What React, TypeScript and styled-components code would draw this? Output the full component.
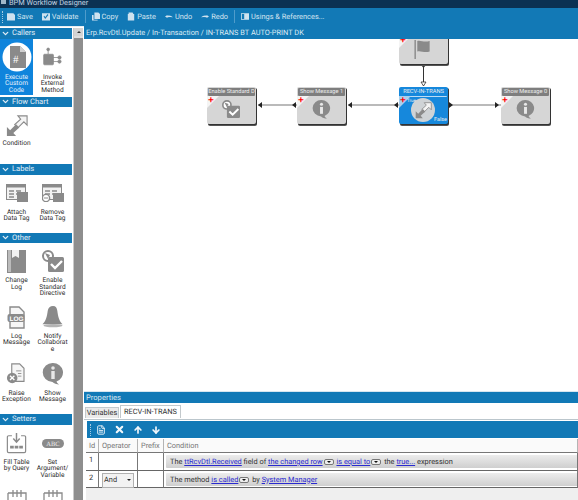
import React from 'react';
import styled, { createGlobalStyle } from 'styled-components';
import { FileText, X, ArrowUp, ArrowDown, ChevronDown } from 'lucide-react';

const GlobalStyle = createGlobalStyle`
  html, body {
    margin: 0;
    padding: 0;
    height: 100%;
    overflow: hidden;
    background: #fff;
    font-family: Roboto, "Liberation Sans", sans-serif;
    text-rendering: geometricPrecision;
  }
  #root { height: 100%; }
`;

const Page = styled.div`
  width: 578px;
  height: 500px;
  display: flex;
  flex-direction: column;
  overflow: hidden;
`;

const TitleBar = styled.div`
  height: 8px;
  flex: none;
  display: flex;
  gap: 3px;
  background: #0b3153;
  color: #c3d3e0;
  font-size: 7.4px;
  line-height: 5px;
  padding-left: 1px;
  overflow: hidden;
`;

const TitleMark = styled.span`
  width: 5px;
  height: 4px;
  background: #9fb6c8;
`;

const Toolbar = styled.div`
  height: 17px;
  flex: none;
  background: #1279b6;
  display: flex;
  align-items: center;
  padding-left: 2px;
  color: #d3e4f0;
  font-size: 7.4px;
  white-space: nowrap;
  overflow: hidden;
`;

const ToolGrip = styled.span`
  height: 12px;
  border-left: 1px dotted #a8cde4;
`;

const GridGrip = styled(ToolGrip)`
  margin-right: -3px;
`;

const ToolButton = styled.span<{ $gap?: number }>`
  display: flex;
  align-items: center;
  gap: 2px;
  margin-left: ${(p) => p.$gap ?? 9}px;
`;

const ToolSep = styled.span`
  width: 1px;
  height: 13px;
  background: #4f9ccb;
  margin-left: 6px;
`;

const Body = styled.div`
  flex: 1;
  min-height: 0;
  display: flex;
  background: #1279b6;
`;

const Sidebar = styled.div`
  width: 84px;
  flex: none;
  display: flex;
  padding-top: 1px;
  background: #fff;
  border-top: 1px solid #e6eef4;
  margin-top: 1px;
  box-sizing: border-box;
  overflow: hidden;
`;

const Palette = styled.div`
  width: 73px;
  flex: none;
`;

const SideScroll = styled.div`
  width: 10px;
  flex: none;
  background: #8e8e8e;
  border-left: 1px solid #c9c9c9;
  box-sizing: border-box;
  display: flex;
  flex-direction: column;
`;

const ScrollButton = styled.div`
  height: 8px;
  background: #d4d4d4;
  display: flex;
  align-items: center;
  justify-content: center;
  &::before {
    content: '';
    border-left: 2px solid transparent;
    border-right: 2px solid transparent;
    border-bottom: 2px solid #333;
  }
`;

const ScrollGap = styled.div`
  height: 2px;
  background: #dedede;
`;

const SectionHeader = styled.div`
  height: 10.5px;
  margin-right: 1px;
  background: #1279b6;
  color: #e2eef6;
  font-size: 7.6px;
  line-height: 10.5px;
  display: flex;
  align-items: center;
  gap: 2px;
  padding-left: 1px;
`;

const TileGrid = styled.div<{ $height: number }>`
  display: grid;
  grid-template-columns: 33px 39px;
  grid-auto-rows: min-content;
  height: ${(p) => p.$height}px;
`;

const Tile = styled.div<{ $active?: boolean; $pad: number }>`
  display: flex;
  flex-direction: column;
  align-items: center;
  text-align: center;
  padding-top: ${(p) => p.$pad}px;
  min-height: ${(p) => (p.$active ? 56 : 0)}px;
  box-sizing: border-box;
  background: ${(p) => (p.$active ? '#0f84dc' : 'transparent')};
  color: ${(p) => (p.$active ? '#e6f1fb' : '#2b2b2b')};
  font-size: 6.6px;
  line-height: 6.6px;
`;

const TileIcon = styled.div<{ $h: number }>`
  height: ${(p) => p.$h}px;
  display: flex;
  align-items: flex-start;
  justify-content: center;
  flex: none;
`;

const Main = styled.div`
  flex: 1;
  min-width: 0;
  display: flex;
  flex-direction: column;
`;

const Breadcrumb = styled.div`
  height: 12px;
  flex: none;
  margin-top: 2px;
  padding-left: 2px;
  color: #dcebf5;
  font-size: 7.4px;
  line-height: 12px;
  white-space: nowrap;
  overflow: hidden;
`;

const Canvas = styled.div`
  height: 352px;
  flex: none;
  position: relative;
  background: #fff;
  overflow: hidden;
`;

const Node = styled.div<{ $x: number; $y: number; $active?: boolean }>`
  position: absolute;
  left: ${(p) => p.$x}px;
  top: ${(p) => p.$y}px;
  width: 49px;
  height: 37px;
  border-radius: 2px;
  background: ${(p) => (p.$active ? '#1688dc' : '#d6d6d6')};
  box-shadow: 1px 1px 0 #333, 1px 2px 0 #555;
  color: #eee;
  font-size: 5.7px;
`;

const NodeTitle = styled.div<{ $active?: boolean }>`
  height: 8px;
  margin: 1px 1px 0;
  border-radius: 1px;
  background: ${(p) => (p.$active ? '#1688dc' : '#7e7e7e')};
  border-bottom: ${(p) => (p.$active ? '1px solid #bcdcf5' : 'none')};
  line-height: 8px;
  text-align: center;
  white-space: nowrap;
  overflow: hidden;
`;

const Corner = styled.div<{ $active?: boolean }>`
  position: absolute;
  left: 0;
  top: 9px;
  width: 0;
  height: 0;
  border-top: 12px solid ${(p) => (p.$active ? '#a9cfee' : '#f4f4f4')};
  border-right: 12px solid transparent;
`;

const RedPlus = styled.div`
  position: absolute;
  left: 1px;
  top: 9px;
  color: #f00;
  font: bold 10px/9px "Liberation Sans", sans-serif;
`;

const NodeIcon = styled.div`
  position: absolute;
  left: 15px;
  top: 13px;
`;

const ActiveDisc = styled.div`
  position: absolute;
  left: 12px;
  top: 11px;
  width: 24px;
  height: 24px;
  border-radius: 50%;
  background: #cfd3d6;
  display: flex;
  align-items: center;
  justify-content: center;
`;

const TrueLabel = styled.div`
  position: absolute;
  left: 8px;
  top: 12px;
  font-size: 4.5px;
  line-height: 5px;
`;

const FalseLabel = styled.div`
  position: absolute;
  right: 1px;
  bottom: 0;
  font-size: 5.5px;
  line-height: 7px;
`;

const Wires = styled.svg`
  position: absolute;
  left: 0;
  top: 0;
`;

const Properties = styled.div`
  flex: 1;
  min-height: 0;
  display: flex;
  flex-direction: column;
  background: #fff;
`;

const PropertiesHeader = styled.div`
  height: 11px;
  flex: none;
  padding-left: 2px;
  background: #1279b6;
  color: #d9e8f2;
  font-size: 7.6px;
  line-height: 11px;
  border-top: 1px solid #d8e6ef;
`;

const Tabs = styled.div`
  height: 14px;
  flex: none;
  display: flex;
  align-items: flex-end;
  gap: 1px;
  padding: 0 0 1px 1px;
  border-bottom: 1px solid #bbc6cc;
  box-sizing: border-box;
  margin-top: 3px;
`;

const Tab = styled.div<{ $active?: boolean }>`
  width: ${(p) => (p.$active ? 61 : 34)}px;
  height: ${(p) => (p.$active ? 13 : 11)}px;
  font-size: 7.4px;
  line-height: ${(p) => (p.$active ? 12 : 10)}px;
  text-align: center;
  color: #333;
  border: 1px solid #c3c9cc;
  border-bottom: none;
  background: ${(p) => (p.$active ? '#fff' : '#eaeaea')};
  box-sizing: border-box;
`;

const GridToolbar = styled.div`
  height: 17px;
  flex: none;
  margin: 1px 0 0 3px;
  background: #1279b6;
  display: flex;
  align-items: center;
  gap: 8px;
  padding-left: 3px;
  color: #f2f7fb;
`;

const Table = styled.div`
  flex: 1;
  margin: 1px 0 0 2px;
  display: grid;
  grid-template-columns: 13px 39px 26px 1fr;
  grid-template-rows: 14px 17.5px 17.5px 1fr;
  font-size: 7.4px;
  color: #333;
`;

const HeadCell = styled.div`
  line-height: 13px;
  padding-left: 3px;
  color: #777;
  background: #fafafa;
  border-right: 1px solid #b4b4b4;
  border-bottom: 1px solid #777;
`;

const Cell = styled.div`
  padding: 2px 3px 0;
  line-height: 10px;
  background: #fff;
  border-right: 1px solid #777;
  border-bottom: 1px solid #666;
  box-sizing: border-box;
  min-width: 0;
`;

const Select = styled.div`
  height: 13px;
  padding: 0 2px 0 1px;
  display: flex;
  align-items: center;
  justify-content: space-between;
  border: 1px solid #b0b0b0;
  background: #f2f2f2;
  &::after {
    content: '';
    border-left: 2px solid transparent;
    border-right: 2px solid transparent;
    border-top: 2px solid #222;
  }
`;

const ConditionBar = styled.div`
  height: 13px;
  margin: 0 -3px 0 -1px;
  padding-left: 4px;
  line-height: 13px;
  white-space: nowrap;
  background: linear-gradient(#ececec, #cfcfcf);
  border-radius: 1px 0 0 1px;
`;

const Link = styled.span`
  color: #2a2ad0;
  text-decoration: underline;
`;

const DropButton = styled.span`
  display: inline-flex;
  align-items: center;
  justify-content: center;
  vertical-align: middle;
  width: 8px;
  height: 4px;
  margin: 0 1px;
  border-radius: 2px;
  border: 1px solid #777;
  background: #eee;
  &::after {
    content: '';
    border-left: 2px solid transparent;
    border-right: 2px solid transparent;
    border-top: 2px solid #111;
  }
`;

const Footer = styled.div`
  grid-column: 1 / -1;
  background: #efefef;
`;

const G = '#8a8a8a';

const SmallIcon = ({ d }: { d: string }) => (
  <svg width="8" height="9" viewBox="0 0 10 10" fill="#cfe2ef">
    <path d={d} />
  </svg>
);

const CodeIcon = () => (
  <svg width="30" height="30" viewBox="0 0 30 30">
    <circle cx="15" cy="15" r="14.5" fill="#fff" />
    <path d="M8 4h10l6 6v16H8z" fill={G} />
    <path d="M18 4v6h6z" fill="#d0d0d0" />
    <text x="11" y="21" fontSize="11" fill="#fff" fontFamily="Liberation Serif, serif">#</text>
  </svg>
);

const MethodIcon = () => (
  <svg width="24" height="21" viewBox="0 0 24 26" fill={G} stroke={G}>
    <circle cx="6" cy="3" r="1.7" />
    <path d="M6 4v5" />
    <rect x="0.5" y="9" width="12" height="13" rx="1" />
    <path d="M12 13h8M12 18h8" />
    <circle cx="20" cy="13" r="2" />
    <circle cx="20" cy="18" r="2" />
  </svg>
);

const ConditionIcon = ({ size = 22 }: { size?: number }) => (
  <svg width={size} height={size} viewBox="0 0 24 24">
    <path d="M13 1h10v10l-3.500-3.500L13 14l-3.500-3.500L16 4.500z" fill="#f4f4f4" stroke={G} strokeWidth="1.200" />
    <path d="M11 23H1V13l3.500 3.500L11 10l3.500 3.500L8 19.500z" fill={G} />
  </svg>
);

const TagIcon = ({ minus }: { minus?: boolean }) => (
  <svg width="22" height="18" viewBox="0 0 22 18">
    <rect x="0.5" y="0.5" width="19" height="15" fill="#f2f2f2" stroke={G} />
    <rect x="0.5" y="0.5" width="19" height="3" fill={G} />
    <path d="M3 7h5M10 7h5M3 10h5M10 10h3M3 13h5" stroke={G} strokeWidth="1.4" />
    {minus ? (
      <>
        <rect x="11" y="9" width="11" height="9" fill={G} />
        <circle cx="4" cy="14" r="3.6" fill="#fff" stroke={G} strokeWidth="1.4" />
        <path d="M2 14h4" stroke={G} />
      </>
    ) : (
      <rect x="11" y="8" width="11" height="10" fill={G} />
    )}
  </svg>
);

const LogBookIcon = () => (
  <svg width="19" height="23" viewBox="0 0 19 23">
    <path d="M0 0h19v23H0z" fill={G} />
    <path d="M1 0h3v22H1z" fill="#bbb" />
    <path d="M5 0h7v8l-3.500-2L5 8z" fill="#f2f2f2" />
  </svg>
);

const DirectiveIcon = ({ size = 22 }: { size?: number }) => (
  <svg width={size} height={size} viewBox="0 0 22 22">
    <circle cx="6" cy="6" r="5" fill="#fff" stroke={G} strokeWidth="2" />
    <path d="M3 3l5 2-2 4z" fill={G} />
    <rect x="6" y="7" width="16" height="15" rx="1.500" fill={G} />
    <path d="M9 14l4 4 7-7" fill="none" stroke="#fff" strokeWidth="2.4" />
  </svg>
);

const LogIcon = () => (
  <svg width="19" height="23" viewBox="0 0 19 23" fill="none">
    <path d="M3 1h9l5 5v16H3z" stroke={G} strokeWidth="1.4" fill="#f6f6f6" />
    <rect x="0.5" y="8" width="17" height="8" rx="2" fill={G} />
    <text x="2.5" y="14.500" fontSize="6.500" fontWeight="700" fill="#fff" fontFamily="Liberation Sans, sans-serif">LOG</text>
  </svg>
);

const BellIcon = () => (
  <svg width="22" height="22" viewBox="0 0 22 23">
    <path d="M11 0c3 0 4 2 4.500 5 .7 6 2 11 5.500 14H0c3.500-3 4.800-8 5.500-14C6 2 8 0 11 0z" fill={G} />
    <ellipse cx="11" cy="20.500" rx="10" ry="1.800" fill="#b4b4b4" />
  </svg>
);

const ExceptionIcon = () => (
  <svg width="22" height="21" viewBox="0 0 24 24">
    <path d="M6 1h9l5 5v15H6z" fill="#f6f6f6" stroke={G} strokeWidth="1.300" />
    <path d="M11 9h6M13 12h4M13 15h4" stroke={G} />
    <circle cx="6.500" cy="17" r="6" fill={G} />
    <path d="M4 14.500l5 5M9 14.500l-5 5" stroke="#fff" strokeWidth="1.500" />
  </svg>
);

const InfoIcon = ({ size = 21 }: { size?: number }) => (
  <svg width={size} height={size} viewBox="0 0 22 22">
    <path d="M11 0a10 9.500 0 0 1 3.500 18.400c.5 1.300 1.500 2.300 2.800 3.100-2.800 0-5.200-1-6.800-2.500A10 9.500 0 0 1 11 0z" fill={G} />
    <circle cx="11" cy="5" r="1.800" fill="#e8e8e8" />
    <rect x="9.300" y="8" width="3.400" height="8" fill="#e8e8e8" />
  </svg>
);

const FillTableIcon = () => (
  <svg width="21" height="21" viewBox="0 0 22 23" fill="none">
    <path d="M6 3H2.500Q1 3 1 4.500V20q0 1.500 1.500 1.500h17Q21 21.500 21 20V4.500Q21 3 19.500 3H16" stroke={G} strokeWidth="1.300" />
    <path d="M11 0v9M7.500 6l3.500 4 3.500-4" stroke={G} strokeWidth="1.600" />
    <path d="M4 14h4v3H4zM9 14h4v3H9zM14 14h4v3h-4z" fill={G} />
  </svg>
);

const AbcIcon = () => (
  <svg width="22" height="15" viewBox="0 0 22 15">
    <rect y="6" width="22" height="9" rx="4.500" fill={G} />
    <text x="11" y="13" fontSize="6.500" textAnchor="middle" fill="#eee" fontFamily="Liberation Serif, serif">ABC</text>
  </svg>
);

const TableIcon = () => (
  <svg width="20" height="12" viewBox="0 0 20 12" fill="none" stroke={G}>
    <path d="M1 4h18v8M1 4v8M6 1v7M14 1v7M10 1v7" strokeWidth="1.300" />
  </svg>
);

const FlagIcon = () => (
  <svg width="18" height="19" viewBox="0 0 18 20">
    <rect x="0" y="0" width="1.500" height="20" fill={G} />
    <path d="M3 1c4-1 7 2 13 0v11c-5 2-9-1-13 0z" fill={G} />
  </svg>
);

const Section = ({ title }: { title: string }) => (
  <SectionHeader>
    <ChevronDown size={9} strokeWidth={3.500} />
    {title}
  </SectionHeader>
);

const DiagramNode = ({ x, y, title, active, icon, hideTitle }: {
  x: number;
  y: number;
  title?: string;
  active?: boolean;
  icon: React.ReactNode;
  hideTitle?: boolean;
}) => (
  <Node $x={x} $y={y} $active={active}>
    {!hideTitle && <NodeTitle $active={active}>{title}</NodeTitle>}
    <Corner $active={active} />
    {active ? <ActiveDisc>{icon}</ActiveDisc> : <NodeIcon>{icon}</NodeIcon>}
    <RedPlus>+</RedPlus>
    {active && <TrueLabel>True</TrueLabel>}
    {active && <FalseLabel>False</FalseLabel>}
  </Node>
);

const App = () => (
  <Page>
    <GlobalStyle />
    <TitleBar>
      <TitleMark />
      BPM Workflow Designer
    </TitleBar>
    <Toolbar>
      <ToolGrip />
      <ToolButton $gap={4}>
        <SmallIcon d="M0 1h8l2 2v7H0z" />Save
      </ToolButton>
      <ToolButton>
        <SmallIcon d="M0 1h10v9H0zM2 5l2 3 4-5-1-1-3 4-1-2z" />Validate
      </ToolButton>
      <ToolSep />
      <ToolButton $gap={6}>
        <SmallIcon d="M3 0h5l2 2v6H3zM0 3h2v6h5v1H0z" />Copy
      </ToolButton>
      <ToolButton>
        <SmallIcon d="M2 0h5l1 2h1v8H1V2h1z" />Paste
      </ToolButton>
      <ToolButton>
        <SmallIcon d="M0 5l3-2v1q4-1 7 2-4-1-7 0v1z" />Undo
      </ToolButton>
      <ToolButton>
        <SmallIcon d="M10 5L7 3v1Q3 3 0 6q4-1 7 0v1z" />Redo
      </ToolButton>
      <ToolSep />
      <ToolButton $gap={6}>
        <SmallIcon d="M0 1h10v8H0zM1 2v6h3V2z" />Usings &amp; References...
      </ToolButton>
    </Toolbar>
    <Body>
      <Sidebar>
        <Palette>
          <Section title="Callers" />
          <TileGrid $height={58}>
            <Tile $active $pad={3}>
              <TileIcon $h={32}><CodeIcon /></TileIcon>
              Execute<br />Custom<br />Code
            </Tile>
            <Tile $pad={8}>
              <TileIcon $h={27}><MethodIcon /></TileIcon>
              Invoke<br />External<br />Method
            </Tile>
          </TileGrid>
          <Section title="Flow Chart" />
          <TileGrid $height={57}>
            <Tile $pad={8}>
              <TileIcon $h={25}><ConditionIcon /></TileIcon>
              Condition
            </Tile>
          </TileGrid>
          <Section title="Labels" />
          <TileGrid $height={58}>
            <Tile $pad={9}>
              <TileIcon $h={25}><TagIcon /></TileIcon>
              Attach<br />Data Tag
            </Tile>
            <Tile $pad={9}>
              <TileIcon $h={25}><TagIcon minus /></TileIcon>
              Remove<br />Data Tag
            </Tile>
          </TileGrid>
          <Section title="Other" />
          <TileGrid $height={171}>
            <Tile $pad={7}>
              <TileIcon $h={27}><LogBookIcon /></TileIcon>
              Change<br />Log
            </Tile>
            <Tile $pad={7}>
              <TileIcon $h={27}><DirectiveIcon /></TileIcon>
              Enable<br />Standard<br />Directive
            </Tile>
            <Tile $pad={9}>
              <TileIcon $h={27}><LogIcon /></TileIcon>
              Log<br />Message
            </Tile>
            <Tile $pad={9}>
              <TileIcon $h={27}><BellIcon /></TileIcon>
              Notify<br />Collaborat<br />e
            </Tile>
            <Tile $pad={10}>
              <TileIcon $h={27}><ExceptionIcon /></TileIcon>
              Raise<br />Exception
            </Tile>
            <Tile $pad={10}>
              <TileIcon $h={27}><InfoIcon size={22} /></TileIcon>
              Show<br />Message
            </Tile>
          </TileGrid>
          <Section title="Setters" />
          <TileGrid $height={75}>
            <Tile $pad={8}>
              <TileIcon $h={26}><FillTableIcon /></TileIcon>
              Fill Table<br />by Query
            </Tile>
            <Tile $pad={8}>
              <TileIcon $h={26}><AbcIcon /></TileIcon>
              Set<br />Argument/<br />Variable
            </Tile>
            <Tile $pad={11}><TileIcon $h={14}><TableIcon /></TileIcon></Tile>
            <Tile $pad={11}><TileIcon $h={14}><TableIcon /></TileIcon></Tile>
          </TileGrid>
        </Palette>
        <SideScroll>
          <ScrollButton />
          <ScrollGap />
        </SideScroll>
      </Sidebar>
      <Main>
        <Breadcrumb>Erp.RcvDtl.Update / In-Transaction / IN-TRANS BT AUTO-PRINT DK</Breadcrumb>
        <Canvas>
          <Wires width="494" height="352" viewBox="0 0 494 352" fill="none">
            <path d="M339.500 26v21" stroke="#333" />
            <path d="M337 26l2.500 3 2.500-3z" fill="#333" />
            <path d="M337 43h5l-2.500 4z" fill="#fff" stroke="#333" strokeWidth=".8" />
            <path d="M174 66h39M264 66h51M365 66h52" stroke="#777" strokeWidth="1.200" />
            <path d="M174 66l4-3v6zM208 66l4-3v6zM264 66l4-3v6zM310 66l4-3v6zM369 66l-4-3v6zM415 66l-4-3v6z" fill="#222" />
          </Wires>
          <DiagramNode x={315} y={-12} hideTitle icon={<FlagIcon />} />
          <DiagramNode x={123} y={48} title="Enable Standard D" icon={<DirectiveIcon size={18} />} />
          <DiagramNode x={213} y={48} title="Show Message 1" icon={<InfoIcon size={19} />} />
          <DiagramNode x={315} y={48} active title="RECV-IN-TRANS" icon={<ConditionIcon size={17} />} />
          <DiagramNode x={417} y={48} title="Show Message 0" icon={<InfoIcon size={19} />} />
        </Canvas>
        <Properties>
          <PropertiesHeader>Properties</PropertiesHeader>
          <Tabs>
            <Tab>Variables</Tab>
            <Tab $active>RECV-IN-TRANS</Tab>
          </Tabs>
          <GridToolbar>
            <GridGrip />
            <FileText size={10} strokeWidth={2.200} />
            <X size={11} strokeWidth={4.500} />
            <ArrowUp size={10} strokeWidth={4} />
            <ArrowDown size={10} strokeWidth={4} />
          </GridToolbar>
          <Table>
            <HeadCell>Id</HeadCell>
            <HeadCell>Operator</HeadCell>
            <HeadCell>Prefix</HeadCell>
            <HeadCell>Condition</HeadCell>
            <Cell>1</Cell>
            <Cell />
            <Cell />
            <Cell>
              <ConditionBar>
                The <Link>ttRcvDtl.Received</Link> field of <Link>the changed row</Link>
                <DropButton /> <Link>is equal to</Link>
                <DropButton /> the <Link>true...</Link> expression
              </ConditionBar>
            </Cell>
            <Cell>2</Cell>
            <Cell><Select>And</Select></Cell>
            <Cell />
            <Cell>
              <ConditionBar>
                The method <Link>is called</Link>
                <DropButton /> by <Link>System Manager</Link>
              </ConditionBar>
            </Cell>
            <Footer />
          </Table>
        </Properties>
      </Main>
    </Body>
  </Page>
);

export default App;
